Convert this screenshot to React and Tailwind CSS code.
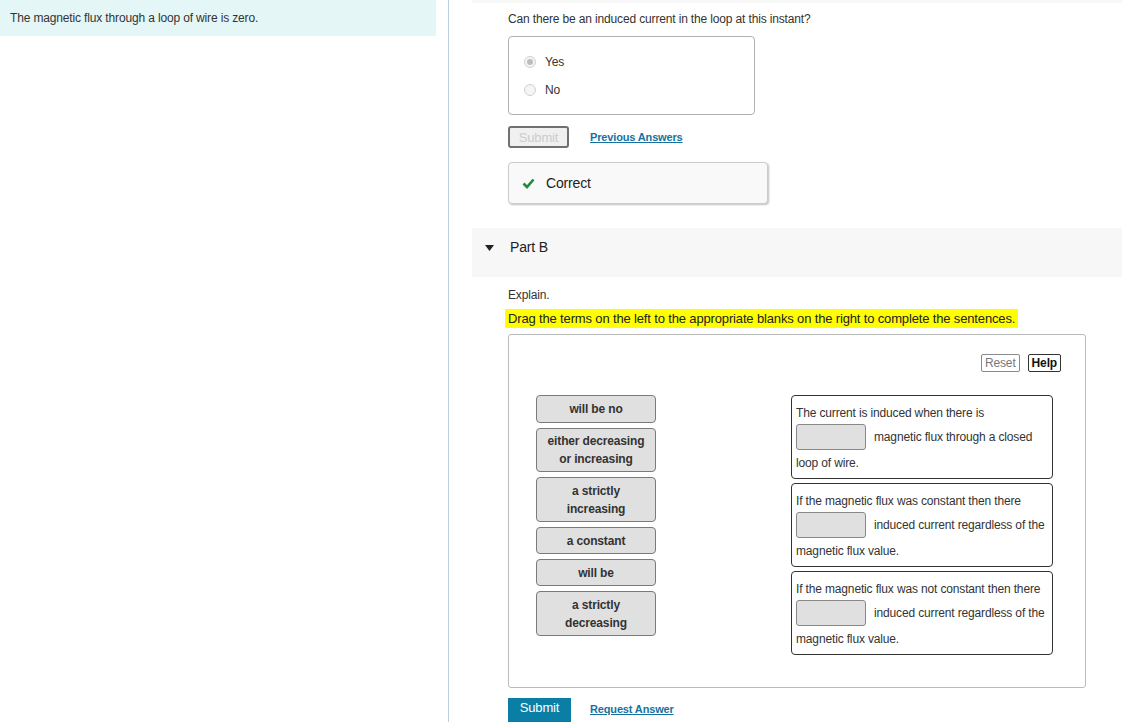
import React from 'react';

const terms = [
    { label: 'will be no', h: 'h-[28px]' },
    { label: 'either decreasing or increasing', h: 'h-[44px]' },
    { label: 'a strictly increasing', h: 'h-[45px]' },
    { label: 'a constant', h: 'h-[27px]' },
    { label: 'will be', h: 'h-[27px]' },
    { label: 'a strictly decreasing', h: 'h-[45px]' },
];

const sentences = [
    { first: 'The current is induced when there is', mid: 'magnetic flux through a closed', last: 'loop of wire.' },
    { first: 'If the magnetic flux was constant then there', mid: 'induced current regardless of the', last: 'magnetic flux value.' },
    { first: 'If the magnetic flux was not constant then there', mid: 'induced current regardless of the', last: 'magnetic flux value.' },
];

const Radio = ({ checked, label }) => (
    <div className="flex items-center h-[28px] pl-[15px]">
        <span className="w-[12px] h-[12px] rounded-full border border-[#d0d0d0] bg-[#f5f5f5] flex items-center justify-center">
            {checked && <span className="w-[6px] h-[6px] rounded-full bg-[#bdbdbd]"></span>}
        </span>
        <span className="ml-[9px] text-[12px] text-[#333]">{label}</span>
    </div>
);

const App = () => {
    return (
        <div className="flex min-h-[760px] bg-white text-[#333] tracking-[-0.15px]" style={{ fontFamily: '"Liberation Sans", Arial, sans-serif' }}>
            {/* left column */}
            <div className="w-[449px] shrink-0 border-r border-[#bccfe0]">
                <div className="w-[436px] h-[36px] bg-[#e5f6f7] flex items-center pl-[10px] text-[12px] text-[#333]">
                    The magnetic flux through a loop of wire is zero.
                </div>
            </div>

            {/* right column */}
            <div className="flex-1 pl-[23px]">
                <div className="h-[3px] bg-[#f7f7f7]"></div>
                <div className="pl-[36px]">
                    <p className="mt-[7px] text-[12px] leading-[18px]">Can there be an induced current in the loop at this instant?</p>

                    <div className="mt-[8px] w-[247px] h-[79px] border border-[#b0b0b0] rounded-[4px] pt-[11px]">
                        <Radio checked label="Yes" />
                        <Radio label="No" />
                    </div>

                    <div className="mt-[11px] flex items-center">
                        <button disabled className="w-[61px] h-[22px] border-2 border-[#707070] rounded-[3px] bg-[#f0f0f0] text-[13px] text-[#cccccc] leading-none">
                            Submit
                        </button>
                        <a href="#" className="ml-[21px] text-[11px] font-bold text-[#17719f] underline">Previous Answers</a>
                    </div>

                    <div className="mt-[14px] w-[260px] h-[42px] border border-[#cccccc] rounded-[4px] bg-[#f9f9f9] shadow-[1px_1px_2px_rgba(0,0,0,0.25)] flex items-center pl-[13px]">
                        <svg width="13" height="11" viewBox="0 0 13 11">
                            <path d="M1.5 5.5 L5 9 L11.5 1.5" fill="none" stroke="#218a3c" strokeWidth="2.6" />
                        </svg>
                        <span className="ml-[11px] text-[14px] text-[#222]">Correct</span>
                    </div>
                </div>

                <div className="mt-[24px] h-[49px] bg-[#f7f7f7] flex items-center pl-[13px] pb-[10px]">
                    <svg width="9" height="6" viewBox="0 0 9 6">
                        <polygon points="0,0 9,0 4.5,6" fill="#222" />
                    </svg>
                    <span className="ml-[16px] text-[14px] text-[#222]">Part B</span>
                </div>

                <div className="pl-[36px]">
                    <p className="mt-[9px] text-[12px] leading-[18px]">Explain.</p>
                    <p className="mt-[5px] w-fit -ml-[3px] px-[3px] text-[13px] leading-[19px] bg-[#ffff00] text-[#222]">
                        Drag the terms on the left to the appropriate blanks on the right to complete the sentences.
                    </p>

                    <div className="mt-[6px] w-[578px] h-[354px] border border-[#bbbbbb] rounded-[3px]">
                        <div className="flex justify-end gap-[8px] pt-[19px] pr-[24px]">
                            <button className="h-[18px] px-[3px] border border-[#8a8a8a] rounded-[2px] text-[12px] leading-none text-[#777]">Reset</button>
                            <button className="h-[18px] px-[3px] border border-[#333] rounded-[2px] text-[12px] leading-none font-bold text-[#111]">Help</button>
                        </div>

                        <div className="flex mt-[23px] pl-[27px]">
                            <div className="w-[120px] flex flex-col gap-[5px]">
                                {terms.map((t) => (
                                    <div key={t.label} className={`${t.h} border border-[#7a7a7a] rounded-[4px] bg-[#e0e0e0] flex items-center justify-center text-center px-[8px] text-[12px] leading-[18px] font-bold text-[#333]`}>
                                        {t.label}
                                    </div>
                                ))}
                            </div>

                            <div className="ml-[135px] w-[262px] flex flex-col gap-[4px]">
                                {sentences.map((s, i) => (
                                    <div key={i} className="h-[84px] border border-[#333] rounded-[4px] pl-[4px] pt-[8px] text-[12px] leading-[18px] text-[#333]">
                                        <div>{s.first}</div>
                                        <div className="mt-[2px] h-[26px] flex items-center">
                                            <span className="w-[70px] h-[26px] bg-[#e0e0e0] border border-[#888] rounded-[3px]"></span>
                                            <span className="ml-[8px]">{s.mid}</span>
                                        </div>
                                        <div className="mt-[4px]">{s.last}</div>
                                    </div>
                                ))}
                            </div>
                        </div>
                    </div>

                    <div className="mt-[10px] flex items-start">
                        <button className="w-[63px] h-[30px] bg-[#0b7ea6] text-white text-[13px] leading-[16px] pt-[2px] flex justify-center">Submit</button>
                        <a href="#" className="ml-[19px] mt-[4px] text-[11px] leading-[14px] font-bold text-[#17719f] underline">Request Answer</a>
                    </div>
                </div>
            </div>
        </div>
    );
};

export default App;
